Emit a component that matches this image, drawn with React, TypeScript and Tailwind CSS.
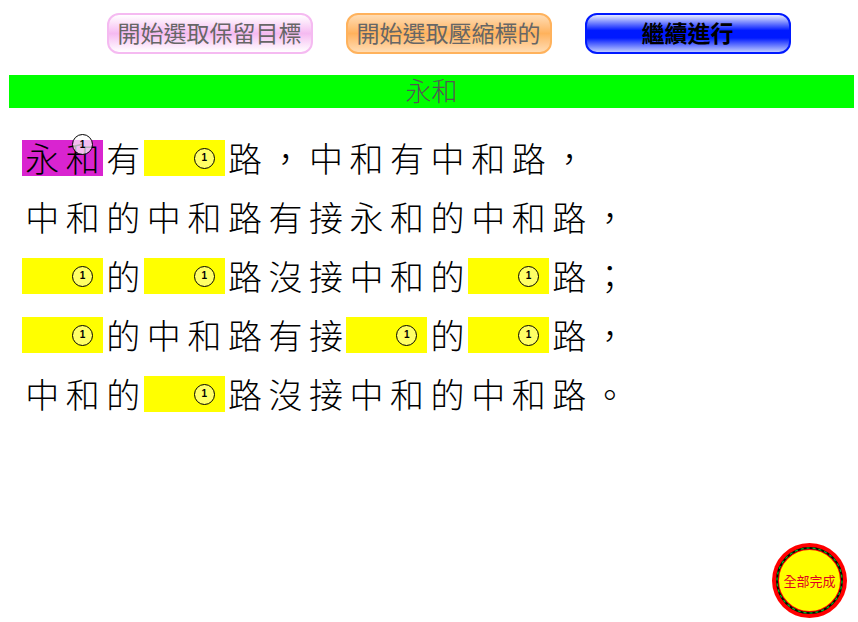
import React from "react";

type Item = { kind: "char"; text: string } | { kind: "kept"; text: string } | { kind: "gap" };

const TITLE = "永和";

// "[永和]" is a kept target, "_" is a compressed word two characters wide.
const LINES = [
  "[永和]有_路，中和有中和路，",
  "中和的中和路有接永和的中和路，",
  "_的_路沒接中和的_路；",
  "_的中和路有接_的_路，",
  "中和的_路沒接中和的中和路。",
];

function parse(line: string): Item[] {
  const parts = line.match(/\[[^\]]+\]|./gu) ?? [];
  return parts.map((part): Item => {
    if (part === "_") return { kind: "gap" };
    if (part.startsWith("[")) return { kind: "kept", text: part.slice(1, -1) };
    return { kind: "char", text: part };
  });
}

function Line({ text }: { text: string }) {
  return (
    <p className="grid grid-cols-[repeat(15,minmax(0,1fr))] text-center text-[34px] leading-9">
      {parse(text).map((item, i) => {
        if (item.kind === "char") return <span key={i}>{item.text}</span>;
        if (item.kind === "kept")
          return (
            <span key={i} className="relative col-span-2 grid grid-cols-2 bg-[#d924d0]">
              {[...item.text].map((c) => (
                <span key={c}>{c}</span>
              ))}
              <Badge className="absolute -top-1.5 right-2.5 bg-white/70" />
            </span>
          );
        return (
          <span key={i} className="col-span-2 flex items-center justify-end bg-[#ffff00] pr-2.5">
            <Badge className="bg-white/40" />
          </span>
        );
      })}
    </p>
  );
}

function Badge({ className }: { className: string }) {
  return (
    <span
      className={`flex size-[21px] items-center justify-center rounded-full border border-black font-['Liberation_Sans',sans-serif] text-[10px] leading-none font-bold ${className}`}
    >
      1
    </span>
  );
}

function Ring() {
  return (
    <svg viewBox="0 0 75 75" className="col-start-1 row-start-1 size-full" aria-hidden="true">
      <circle cx="37.5" cy="37.5" r="37.5" fill="#ff0000" />
      <circle cx="37.5" cy="37.5" r="31.5" fill="#ffff00" stroke="#ff0000" strokeWidth="2" />
      <circle cx="37.5" cy="37.5" r="32.5" fill="none" stroke="#001000" strokeWidth="2" />
      <circle
        cx="37.5"
        cy="37.5"
        r="32.5"
        fill="none"
        stroke="#00c020"
        strokeWidth="1.2"
        strokeDasharray="3 3"
      />
    </svg>
  );
}

const BUTTON =
  "h-[41px] w-[206px] rounded-xl border-2 pb-[3px] text-[23px] leading-none whitespace-nowrap";

export default function App() {
  return (
    <main className="flex min-h-screen flex-col bg-white font-['Noto_Sans_CJK_TC',sans-serif] font-light text-black">
      <nav className="flex justify-center gap-[33px] pt-[13px] pl-[39px]">
        <button
          type="button"
          className={`${BUTTON} border-[#f5baf1] bg-linear-to-b from-white via-[#f5baf1] to-white font-normal text-[#666]`}
        >
          開始選取保留目標
        </button>
        <button
          type="button"
          className={`${BUTTON} border-[#ffb25c] bg-linear-to-b from-[#ffdcb3] via-[#ffb25c] to-[#ffdcb3] font-normal text-[#666]`}
        >
          開始選取壓縮標的
        </button>
        <button
          type="button"
          className={`${BUTTON} border-[#0019ff] bg-[linear-gradient(to_bottom,#e8eeff_0%,#0019ff_42%,#0019ff_62%,#c0ccff_100%)] font-bold text-black`}
        >
          繼續進行
        </button>
      </nav>

      <h1 className="mt-[21px] mr-1 ml-[9px] bg-[#00ff00] pb-[3px] text-center text-[26px] leading-[30px] text-[#555]">
        {TITLE}
      </h1>

      <section className="mt-8 ml-[22px] grid w-[608px] max-w-full gap-[23px]">
        {LINES.map((line) => (
          <Line key={line} text={line} />
        ))}
      </section>

      <footer className="mt-auto flex justify-end pr-[11px] pb-1">
        <button type="button" className="grid size-[75px] place-items-center rounded-full">
          <Ring />
          <span className="col-start-1 row-start-1 text-[13px] leading-5 font-normal whitespace-nowrap text-[#e00020]">
            全部完成
          </span>
        </button>
      </footer>
    </main>
  );
}
